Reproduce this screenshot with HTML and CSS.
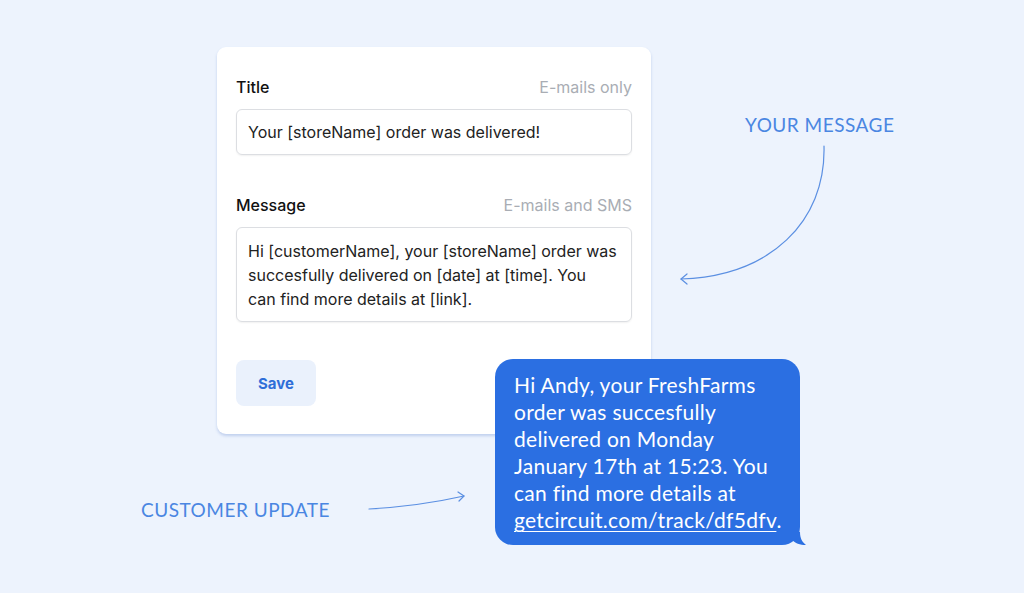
FILE: index.html
```html
<!DOCTYPE html>
<html>
<head>
<meta charset="utf-8">
<link rel="stylesheet" href="styles.css">
</head>
<body>
<div class="scene">
  <div class="card">
    <div class="field-head">
      <span class="label">Title</span>
      <span class="hint">E-mails only</span>
    </div>
    <div class="input">Your [storeName] order was delivered!</div>
    <div class="field-head second">
      <span class="label">Message</span>
      <span class="hint">E-mails and SMS</span>
    </div>
    <div class="input textarea">Hi [customerName], your [storeName] order was<br>succesfully delivered on [date] at [time]. You<br>can find more details at [link].</div>
    <button class="save">Save</button>
  </div>

  <div class="bubble">
    Hi Andy, your FreshFarms<br>order was succesfully<br>delivered on Monday<br>January 17th at 15:23. You<br>can find more details at<br><span class="link">getcircuit.com/track/df5dfv</span>.
    <svg class="tail" width="16" height="14" viewBox="0 0 16 14"><path d="M0 0 L8 0 C8 6 10 10 14 13 C8 13 3 11 0 8 Z" fill="#2b6fe2"/></svg>
  </div>

  <div class="note note-msg">YOUR MESSAGE</div>
  <div class="note note-cust">CUSTOMER UPDATE</div>

  <svg class="arrows" width="1024" height="593" viewBox="0 0 1024 593">
    <g fill="none" stroke="#5b8fe2" stroke-width="1.2" stroke-linecap="round" stroke-linejoin="round">
      <path d="M824 146 C 826 222, 770 276, 681 279"/>
      <path d="M687 274 L681 279 L687 284"/>
      <path d="M369 509 Q 420 506 464 496"/>
      <path d="M458 492 L464 496 L459 501"/>
    </g>
  </svg>
</div>
</body>
</html>
```
FILE: styles.css
```css
* { box-sizing: border-box; }
html, body { margin: 0; padding: 0; }
body {
  background: #edf3fd;
  width: 1024px;
  height: 593px;
  overflow: hidden;
}
.scene {
  position: relative;
  width: 1024px;
  height: 593px;
  padding-top: 47px;
  padding-left: 217px;
}
.card {
  width: 434px;
  background: #fff;
  border-radius: 9px;
  padding: 30px 19px 28px 19px;
  box-shadow: 0 2px 3px rgba(80, 120, 200, 0.28);
  font-family: Inter, "Noto Sans", sans-serif;
}
.field-head {
  display: flex;
  justify-content: space-between;
  align-items: center;
  height: 20px;
  margin-bottom: 12px;
}
.field-head.second { margin-top: 40px; }
.label {
  font-size: 16px;
  font-weight: 500;
  color: #111;
}
.hint {
  font-size: 16px;
  color: #a9adb4;
}
.input {
  border: 1px solid #dcdee2;
  border-radius: 6px;
  padding: 10px 11px;
  font-size: 16px;
  line-height: 24px;
  color: #222;
  white-space: nowrap;
  box-shadow: 0 1px 2px rgba(0,0,0,0.06);
}
.textarea {
  padding: 11px 11px 10px 11px;
}
.save {
  margin-top: 38px;
  width: 80px;
  height: 46px;
  border: none;
  border-radius: 8px;
  background: #eaf1fc;
  color: #2f6ed8;
  font-family: Inter, "Noto Sans", sans-serif;
  font-weight: 700;
  font-size: 15px;
  display: block;
}
.bubble {
  position: absolute;
  left: 495px;
  top: 359px;
  width: 305px;
  height: 186px;
  background: #2b6fe2;
  border-radius: 18px;
  padding: 12px 10px 12px 19px;
  color: #fff;
  font-family: Lato, "Open Sans", sans-serif;
  font-size: 21px;
  line-height: 27px;
  letter-spacing: 0.3px;
  white-space: nowrap;
}
.link { text-decoration: underline; text-underline-offset: 3px; text-decoration-thickness: 1px; }
.tail {
  position: absolute;
  right: -8px;
  bottom: -1px;
}
.note {
  position: absolute;
  font-family: Lato, "Open Sans", sans-serif;
  font-size: 19px;
  letter-spacing: 0.5px;
  color: #4a86e2;
  line-height: 22px;
}
.note-msg { left: 745px; top: 114px; }
.note-cust { left: 141px; top: 499px; }
.arrows {
  position: absolute;
  left: 0;
  top: 0;
  pointer-events: none;
}
```
